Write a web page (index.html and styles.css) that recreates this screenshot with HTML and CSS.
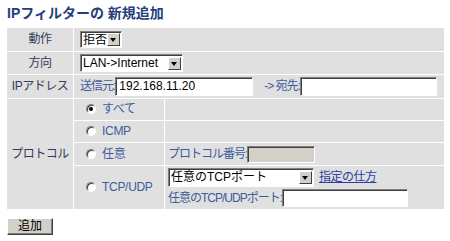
FILE: index.html
```html
<!DOCTYPE html>
<html lang="ja">
<head>
    <meta charset="UTF-8">
    <title>IPフィルターの 新規追加</title>
    <link rel="stylesheet" href="styles.css">
</head>
<body>
    <h1 class="title">IPフィルターの 新規追加</h1>

    <table class="filter">
        <colgroup>
            <col class="c-label">
            <col class="c-radio">
            <col class="c-main">
        </colgroup>
        <tr class="row-a">
            <th>動作</th>
            <td colspan="2" class="pad">
                <span class="select sel-action"><span class="val">拒否</span><span class="arrow"></span></span>
            </td>
        </tr>
        <tr class="row-b">
            <th>方向</th>
            <td colspan="2" class="pad">
                <span class="select sel-dir"><span class="val">LAN-&gt;Internet</span><span class="arrow"></span></span>
            </td>
        </tr>
        <tr class="row-a">
            <th>IPアドレス</th>
            <td colspan="2" class="pad">
                <div class="ip-line">
                    <span class="txt">送信元:</span><span class="field ip-src">192.168.11.20</span>
                    <span class="txt to">-&gt; 宛先:</span><span class="field ip-dst"></span>
                </div>
            </td>
        </tr>
        <tr class="row-c">
            <th rowspan="4">プロトコル</th>
            <td class="radio-cell"><span class="radio checked"></span><span class="txt">すべて</span></td>
            <td></td>
        </tr>
        <tr class="row-c">
            <td class="radio-cell"><span class="radio"></span><span class="txt">ICMP</span></td>
            <td></td>
        </tr>
        <tr class="row-b">
            <td class="radio-cell"><span class="radio"></span><span class="txt">任意</span></td>
            <td class="pad-s"><div class="port-line"><span class="txt">プロトコル番号:</span><span class="field proto-num"></span></div></td>
        </tr>
        <tr class="row-d">
            <td class="radio-cell"><span class="radio"></span><span class="txt">TCP/UDP</span></td>
            <td class="pad-s">
                <div class="port-line">
                    <span class="select sel-port"><span class="val">任意のTCPポート</span><span class="arrow"></span></span>
                    <a href="#" class="help">指定の仕方</a>
                </div>
                <div class="port-line">
                    <span class="txt">任意のTCP/UDPポート:</span><span class="field port-num"></span>
                </div>
            </td>
        </tr>
    </table>

    <button class="btn">追加</button>
</body>
</html>
```

FILE: styles.css
```css
body {
    margin: 0;
    padding: 4px 6px;
    font-family: "Liberation Sans", "Noto Sans CJK JP", sans-serif;
    font-size: 12px;
    line-height: 15px;
    background-color: #fff;
}

.title {
    margin: 0 0 5px 1px;
    font-size: 14px;
    line-height: 18px;
    font-weight: bold;
    color: #24407c;
}

.filter {
    border-spacing: 1px;
    width: 439px;
    table-layout: fixed;
}

.c-label { width: 66px; }
.c-radio { width: 90px; }
.c-main { width: 279px; }

.filter th,
.filter td {
    background-color: #e0e0e0;
    padding: 0;
    white-space: nowrap;
}

.filter th {
    font-weight: normal;
    color: #333c58;
    text-align: center;
    letter-spacing: -0.5px;
}

.row-a { height: 23px; }
.row-b { height: 22px; }
.row-c { height: 21px; }
.row-d { height: 43px; }

.filter .pad { padding-left: 6px; }
.filter .pad-s { padding-left: 3px; }

.txt {
    color: #3f5c9a;
    flex-shrink: 0;
    letter-spacing: -1px;
}

.filter .radio-cell {
    padding-left: 12px;
}

.radio-cell .txt {
    letter-spacing: -0.3px;
}

.radio {
    display: inline-block;
    width: 10px;
    height: 10px;
    box-sizing: border-box;
    border-radius: 50%;
    border: 1px solid;
    border-color: #808080 #fff #fff #808080;
    background: #fff;
    box-shadow: inset 1px 1px 0 #404040;
    vertical-align: -1px;
    margin-right: 6px;
    position: relative;
}

.radio.checked::after {
    content: "";
    position: absolute;
    left: 2px;
    top: 2px;
    width: 4px;
    height: 4px;
    border-radius: 50%;
    background: #000;
}

.select {
    display: inline-flex;
    align-items: center;
    box-sizing: border-box;
    height: 17px;
    border: 1px solid;
    border-color: #808080 #fff #fff #808080;
    box-shadow: inset 1px 1px 0 #404040;
    background: #fff;
    padding: 1px 1px 1px 2px;
    vertical-align: middle;
    color: #000;
    flex-shrink: 0;
}

.select .val {
    flex: 1;
    line-height: 14px;
    white-space: nowrap;
    overflow: hidden;
}

.select .arrow {
    width: 13px;
    height: 13px;
    box-sizing: border-box;
    background: #d4d0c8;
    border: 1px solid;
    border-color: #fff #404040 #404040 #fff;
    position: relative;
    flex-shrink: 0;
}

.select .arrow::after {
    content: "";
    position: absolute;
    left: 2px;
    top: 4px;
    border-left: 3.5px solid transparent;
    border-right: 3.5px solid transparent;
    border-top: 4px solid #000;
}

.sel-action { width: 42px; }
.sel-dir { width: 103px; height: 18px; }
.sel-port { width: 146px; height: 19px; }

.field {
    display: inline-block;
    box-sizing: border-box;
    height: 19px;
    border: 1px solid;
    border-color: #808080 #fff #fff #808080;
    box-shadow: inset 1px 1px 0 #404040;
    background: #fff;
    padding: 1px 3px 0;
    line-height: 15px;
    vertical-align: middle;
    color: #000;
    flex-shrink: 0;
}

.ip-line {
    display: flex;
    align-items: center;
}

.ip-src { width: 138px; }
.to { margin-left: 11px; }
.ip-dst { width: 137px; }

.proto-num {
    width: 68px;
    height: 17px;
    background: #d4d0c8;
}

.port-line {
    display: flex;
    align-items: center;
    height: 21px;
}

.help {
    margin-left: 5px;
    color: #2b3da0;
    letter-spacing: -0.5px;
}

.port-num {
    width: 126px;
    height: 18px;
}

.btn {
    display: block;
    margin: 8px 0 0 1px;
    width: 46px;
    height: 17px;
    padding: 0;
    font-family: "Liberation Sans", "Noto Sans CJK JP", sans-serif;
    font-size: 12px;
    line-height: 13px;
    color: #000;
    background-color: #d4d0c8;
    border: 1px solid;
    border-color: #fff #404040 #404040 #fff;
    box-shadow: inset -1px -1px 0 #808080;
    cursor: pointer;
}
```
